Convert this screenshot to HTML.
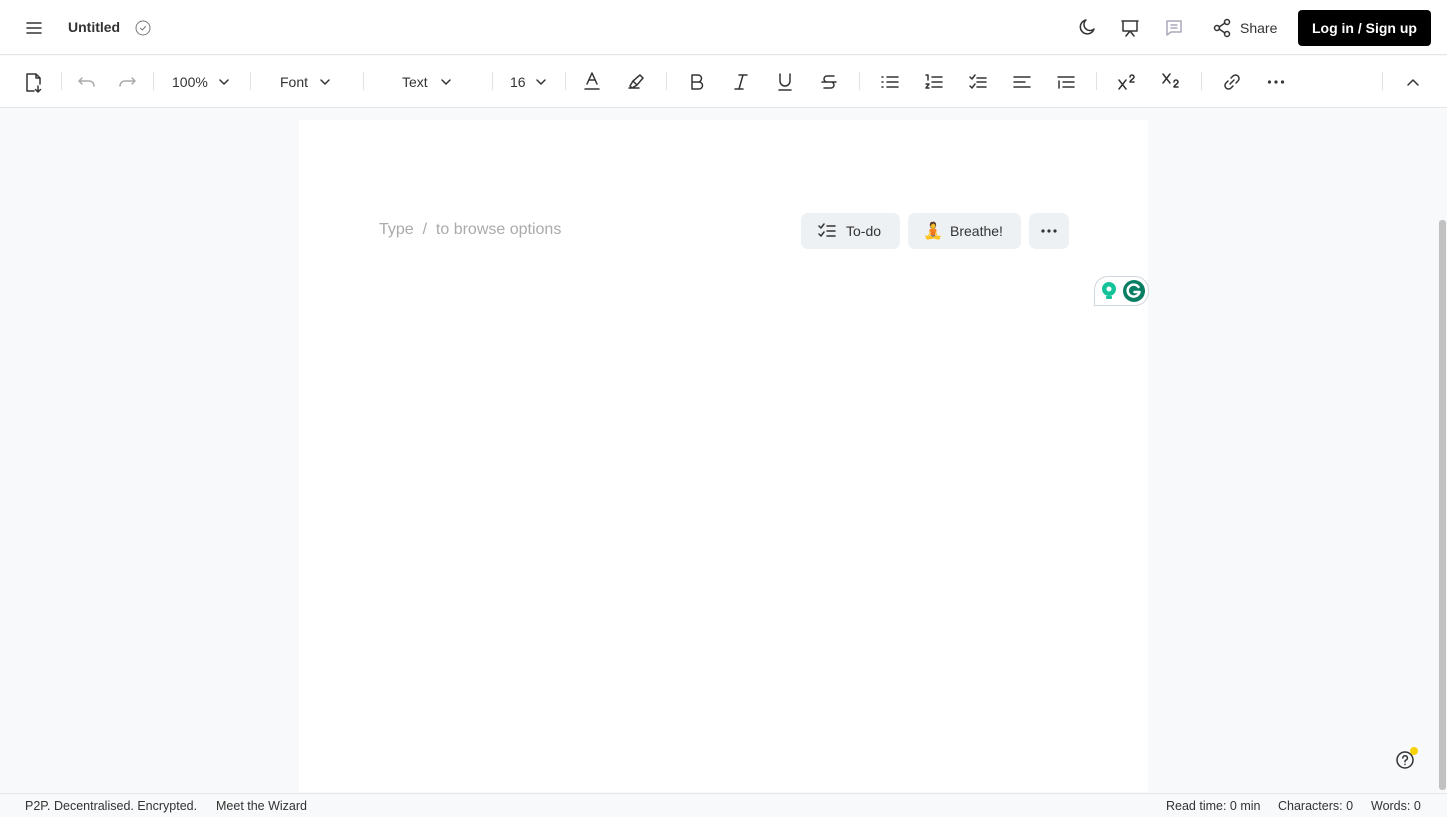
<!DOCTYPE html>
<html><head><meta charset="utf-8"><style>
*{box-sizing:border-box;margin:0;padding:0}
body{width:1447px;height:817px;overflow:hidden;background:#f8f9fa;font-family:"Liberation Sans",sans-serif;color:#222;position:relative}
.top{position:absolute;left:0;top:0;width:1447px;height:55px;background:#fff;border-bottom:1px solid #e6e6e6}
.tb{position:absolute;left:0;top:56px;width:1447px;height:52px;background:#fff;border-bottom:1px solid #e6e6e6}
.a{position:absolute}
.sep{position:absolute;top:16px;width:1px;height:18px;background:#e2e2e2}
.t{position:absolute;font-size:14px;color:#333}
svg{position:absolute;fill:none;stroke:#333;stroke-width:1.5;stroke-linecap:round;stroke-linejoin:round}
.page{position:absolute;left:299px;top:120px;width:849px;height:672px;background:#fff}
.btn{position:absolute;top:213px;height:36px;background:#eef1f3;border-radius:7px;font-size:14px;color:#333}
.foot{position:absolute;left:0;top:793px;width:1447px;height:24px;background:#f8f9fa;border-top:1px solid #e6e6e6;font-size:12.5px;color:#333}
</style></head><body>
<div class="top">
<svg style="left:25px;top:19px" width="18" height="18"><path d="M2 4h14M2 9h14M2 14h14"/></svg>
<div class="t" style="left:68px;top:19px;font-weight:bold;font-size:14px">Untitled</div>
<svg style="left:135px;top:20px;stroke:#777;stroke-width:1" width="16" height="16"><circle cx="8" cy="8" r="7"/><path d="M5.5 8.2l1.8 1.8 3.2-3.5"/></svg>
<svg style="left:1076px;top:18px" width="20" height="20"><path d="M10 2a7 7 0 1 0 8 9A6 6 0 0 1 10 2z"/></svg>
<svg style="left:1120px;top:18px" width="20" height="20"><path d="M2 3h16M3 3v10h14V3M10 13l-4 5M10 13l4 5"/></svg>
<svg style="left:1164px;top:18px;stroke:#aab" width="20" height="20"><path d="M3 3h14v11H7l-4 3z M7 7h6M7 10h6"/></svg>
<svg style="left:1212px;top:18px" width="20" height="20"><circle cx="5" cy="10" r="2.5"/><circle cx="15" cy="4" r="2.5"/><circle cx="15" cy="16" r="2.5"/><path d="M7 9l6-4M7 11l6 4"/></svg>
<div class="t" style="left:1240px;top:20px">Share</div>
<div class="a" style="left:1298px;top:10px;width:133px;height:36px;background:#000;border-radius:4px;color:#fff;font-weight:bold;font-size:14px;text-align:center;line-height:36px">Log in / Sign up</div>
</div>
<div class="tb">
<svg style="left:24px;top:16px" width="20" height="22"><path d="M3 2h9l4 4v6M3 2v17h7M16 6h-4V2M14 14v6M11.5 17.5l2.5 2.5 2.5-2.5"/></svg>
<div class="sep" style="left:61px"></div>
<svg style="left:78px;top:18px;stroke:#aaa" width="18" height="16"><path d="M4 4l-3 3 3 3M1 7h10a5 5 0 0 1 5 5"/></svg>
<svg style="left:118px;top:18px;stroke:#aaa" width="18" height="16"><path d="M14 4l3 3-3 3M17 7H7a5 5 0 0 0-5 5"/></svg>
<div class="sep" style="left:153px"></div>
<div class="t" style="left:172px;top:18px">100%</div>
<svg style="left:218px;top:20px" width="12" height="12"><path d="M2 4l4 4 4-4"/></svg>
<div class="sep" style="left:250px"></div>
<div class="t" style="left:280px;top:18px">Font</div>
<svg style="left:319px;top:20px" width="12" height="12"><path d="M2 4l4 4 4-4"/></svg>
<div class="sep" style="left:363px"></div>
<div class="t" style="left:402px;top:18px">Text</div>
<svg style="left:440px;top:20px" width="12" height="12"><path d="M2 4l4 4 4-4"/></svg>
<div class="sep" style="left:492px"></div>
<div class="t" style="left:510px;top:18px">16</div>
<svg style="left:535px;top:20px" width="12" height="12"><path d="M2 4l4 4 4-4"/></svg>
<div class="sep" style="left:565px"></div>
<svg style="left:582px;top:15px" width="20" height="20"><path d="M5 13l5-11 5 11M7 9h6M3 18h14"/></svg>
<svg style="left:626px;top:15px" width="20" height="20"><path d="M3 17h10M4 15l3-5 7-6 3 3-6 7-5 3z M7 10l3 3"/></svg>
<div class="sep" style="left:666px"></div>
<svg style="left:687px;top:16px" width="20" height="20"><path d="M5 3h6a3.5 3.5 0 0 1 0 7H5zM5 10h7a3.5 3.5 0 0 1 0 7H5z"/></svg>
<svg style="left:731px;top:16px" width="20" height="20"><path d="M8 3h8M4 17h8M12 3L8 17"/></svg>
<svg style="left:775px;top:16px" width="20" height="20"><path d="M5 2v7a5 5 0 0 0 10 0V2M4 18h12"/></svg>
<svg style="left:819px;top:16px" width="20" height="20"><path d="M15 4H8a3 3 0 0 0 0 6h4a3 3 0 0 1 0 6H5M3 10h14"/></svg>
<div class="sep" style="left:859px"></div>
<svg style="left:880px;top:16px" width="20" height="20"><path d="M7 5h11M7 10h11M7 15h11M2 5h1M2 10h1M2 15h1"/></svg>
<svg style="left:924px;top:16px" width="20" height="20"><path d="M8 5h10M8 10h10M8 15h10M2 3h2v5M2 12h3l-3 4h3"/></svg>
<svg style="left:968px;top:16px" width="20" height="20"><path d="M9 6h9M9 10h9M9 15h9M2 5l2 2 3-4M2 14l2 2 3-4"/></svg>
<svg style="left:1012px;top:16px" width="20" height="20"><path d="M2 5h16M2 10h11M2 15h16"/></svg>
<svg style="left:1056px;top:16px" width="20" height="20"><path d="M2 5h16M7 10h11M7 15h11M3 9v7"/></svg>
<div class="sep" style="left:1096px"></div>
<svg style="left:1117px;top:16px" width="20" height="20"><path d="M2 8l7 9M9 8l-7 9M13 5a2 2 0 0 1 4 0c0 2-4 3-4 5h4"/></svg>
<svg style="left:1161px;top:14px" width="20" height="20"><path d="M2 4l7 9M9 4l-7 9M13 12a2 2 0 0 1 4 0c0 2-4 3-4 5h4"/></svg>
<div class="sep" style="left:1201px"></div>
<svg style="left:1222px;top:16px" width="20" height="20"><path d="M8 12l4-4M9 6l2-2a3.5 3.5 0 0 1 5 5l-2 2M11 14l-2 2a3.5 3.5 0 0 1-5-5l2-2"/></svg>
<svg style="left:1266px;top:16px;fill:#333;stroke:none" width="20" height="20"><circle cx="3.5" cy="10" r="1.6"/><circle cx="10" cy="10" r="1.6"/><circle cx="16.5" cy="10" r="1.6"/></svg>
<div class="sep" style="left:1382px"></div>
<svg style="left:1406px;top:20px" width="14" height="12"><path d="M2 9l5-5 5 5"/></svg>
</div>
<div class="page"></div>
<div class="t" style="left:379px;top:221px;font-size:16px;color:#aaa">Type &nbsp;/ &nbsp;to browse options</div>
<div class="btn" style="left:801px;width:99px">
<svg style="left:17px;top:10px" width="18" height="16"><path d="M1 3l2 2 3-4M1 11l2 2 3-4M9 3h8M9 8h8M9 13h8"/></svg>
<span class="a" style="left:45px;top:10px">To-do</span></div>
<div class="btn" style="left:908px;width:113px">
<span class="a" style="left:15px;top:8px;font-size:16px;font-family:'Noto Color Emoji',sans-serif">🧘</span>
<span class="a" style="left:42px;top:10px">Breathe!</span></div>
<div class="btn" style="left:1029px;width:40px">
<svg style="left:11px;top:12px;fill:#333;stroke:none" width="18" height="12"><circle cx="3" cy="6" r="1.6"/><circle cx="9" cy="6" r="1.6"/><circle cx="15" cy="6" r="1.6"/></svg></div>
<div class="a" style="left:1094px;top:276px;width:55px;height:30px;border:1px solid #cfd6dd;border-radius:14px 14px 14px 0;background:#fff"></div>
<svg style="left:1100px;top:281px;stroke:none;fill:#15c39a" width="18" height="20"><circle cx="9" cy="8" r="7"/><rect x="6" y="15" width="6" height="3" rx="1"/><circle cx="9" cy="8" r="2.5" style="fill:#fff"/></svg>
<svg style="left:1122px;top:279px;stroke:none" width="24" height="24"><circle cx="12" cy="12" r="11" style="fill:#0a7e62"/><path d="M16.5 8a6 6 0 1 0 1 5h-5" style="stroke:#fff;stroke-width:2.5;fill:none"/></svg>
<div class="a" style="left:1439px;top:220px;width:7px;height:570px;background:#c1c1c1;border-radius:3px"></div>
<svg style="left:1395px;top:749px" width="22" height="22"><circle cx="10" cy="11" r="8"/><path d="M7.8 9a2.3 2.3 0 1 1 3 2.2c-.8.3-.8 1-.8 1.6M10 15.2v.3"/></svg>
<div class="a" style="left:1410px;top:747px;width:8px;height:8px;border-radius:50%;background:#f7d200"></div>
<div class="foot">
<span class="a" style="left:25px;top:5px">P2P. Decentralised. Encrypted.</span>
<span class="a" style="left:216px;top:5px">Meet the Wizard</span>
<span class="a" style="left:1166px;top:5px">Read time: 0 min</span>
<span class="a" style="left:1278px;top:5px">Characters: 0</span>
<span class="a" style="left:1371px;top:5px">Words: 0</span>
</div>
</body></html>
